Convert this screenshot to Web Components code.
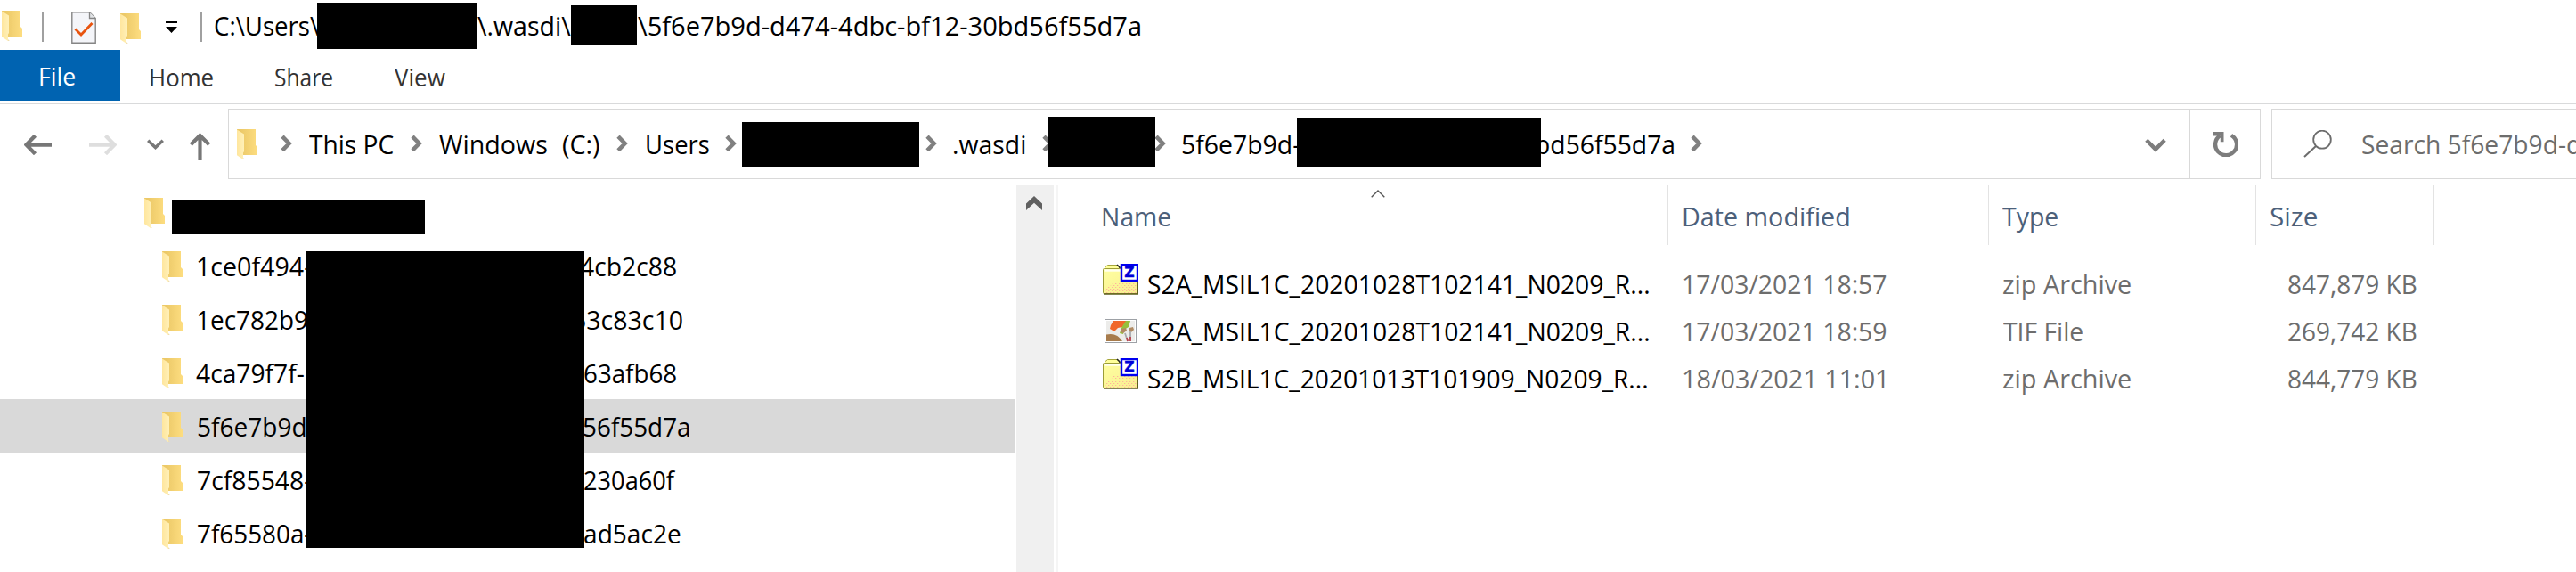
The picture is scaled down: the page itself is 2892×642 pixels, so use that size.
<!DOCTYPE html>
<html lang="en">
<head>
<meta charset="utf-8">
<title>File Explorer</title>
<style>
html,body{margin:0;background:#fff}
body{width:2892px;height:642px;overflow:hidden;font:29px/40px "Open Sans","Noto Sans",sans-serif;color:#000}
</style>
</head>
<body>
<explorer-window></explorer-window>
<script>
const define = (name, html, setup) => {
  customElements.define(name, class extends HTMLElement {
    connectedCallback() {
      if (this.shadowRoot) return;
      this.attachShadow({mode: 'open'}).innerHTML = typeof html === 'function' ? html(this) : html;
      if (setup) setup(this);
    }
  });
};

/* Text whose ink spans exactly the given width */
const ctx = document.createElement('canvas').getContext('2d');
define('fit-text', el => `<style>
  :host{display:block;flex:none;width:${el.getAttribute('w')}px;height:40px;white-space:pre}
  span{display:inline-block;transform-origin:0 0}
</style><span><slot></slot></span>`, el => {
  const cs = getComputedStyle(el);
  ctx.font = `${cs.fontWeight} ${cs.fontSize} ${cs.fontFamily}`;
  const m = ctx.measureText(el.textContent);
  const ink = m.actualBoundingBoxRight + m.actualBoundingBoxLeft;
  const s = el.getAttribute('w') / ink;
  el.shadowRoot.querySelector('span').style.transform = `scaleX(${s}) translateX(${m.actualBoundingBoxLeft}px)`;
});

define('redacted-box', el => `<style>
  :host{display:block;flex:none;position:relative;background:#000;width:${el.getAttribute('w')}px;height:${el.getAttribute('h')}px}
</style>`);

const zip = `<defs><pattern id="d" width="4" height="4" patternUnits="userSpaceOnUse"><path d="M0 .5h1.3M2 2.5h1.3" stroke="#ffb49a" stroke-width="1.2"/></pattern>
  <linearGradient id="y" x2="1" y2="1"><stop offset="0" stop-color="#ffffa0"/><stop offset="1" stop-color="#f8ee90"/></linearGradient></defs>
  <path d="M2.5 6V4L5.5 1.5H17L19 4v3" fill="#ffff99" stroke="#a6a63c"/>
  <path d="M16 1l3 3v4" fill="none" stroke="#222" stroke-width="1.5"/>
  <rect x=".5" y="5.5" width="39" height="28" rx="1" fill="url(#y)" stroke="#9c9c38"/>
  <path d="M1.5 7.5h19" stroke="#fffff0" stroke-width="2.4"/>
  <path d="M12 20h26v13H2v-5l8-4z" fill="url(#d)"/>
  <path d="M1 34h38.4V18" fill="none" stroke="#5d5d1c" stroke-width="1.6"/>
  <rect x="21" y="1" width="18" height="18" fill="#fff" stroke="#0000f0" stroke-width="2.4"/>
  <text transform="translate(30 15.4) scale(1.05 1)" text-anchor="middle" font-family="DejaVu Sans" font-weight="700" font-size="15" fill="#0000d8" stroke="#0000d8" stroke-width=".4">Z</text>`;
const ICONS = {
  folder: [23, 35, `<defs><linearGradient id="b"><stop offset=".2" stop-color="#ecc968"/><stop offset="1" stop-color="#fddd80"/></linearGradient>
    <linearGradient id="f"><stop offset="0" stop-color="#ffe69d"/><stop offset="1" stop-color="#fff0b8"/></linearGradient></defs>
    <path d="M0 0H21V18L23 20V29H7L0 24z" fill="url(#b)"/><path d="M0 0.4L8 5.5V25L7 26.5V34L0 29.2z" fill="url(#f)"/>
    <path d="M7 34l1.8-.1L7 32z" fill="#eeddb0"/>`],
  doc: [28, 36, `<path d="M.8.8H20.5L27.2 7.5V35.2H.8z" fill="#f4f5f9" stroke="#858585" stroke-width="1.4"/><path d="M20.5.8V7.5H27.2" fill="#e1e3e6" stroke="#858585" stroke-width="1.3"/><path d="M4.5 19.5L11 26L23.5 13" fill="none" stroke="#e8540f" stroke-width="2.8"/>`],
  menu: [13, 13, `<path d="M0 0H13V2H0zM0 6H13L6.5 13z"/>`],
  back: [31, 23, `<path d="M31 11.5H3M12.5 1.3L2.5 11.5l10 10.2" fill="none" stroke="#777" stroke-width="4.3"/>`],
  forward: [31, 23, `<path d="M0 11.5H28M18.5 1.3l10 10.2l-10 10.2" fill="none" stroke="#dedede" stroke-width="4.3"/>`],
  recent: [19, 12, `<path d="M1.2 1.7L9.5 9.6L17.8 1.7" fill="none" stroke="#777" stroke-width="3.4"/>`],
  up: [23, 31, `<path d="M11.5 31V3M1.3 13.2L11.5 3L21.7 13.2" fill="none" stroke="#777" stroke-width="4.2"/>`],
  crumb: [13, 18, `<path d="M2 1.2L9.6 9L2 16.8" fill="none" stroke="#808080" stroke-width="4.6"/>`],
  down: [24, 16, `<path d="M1.8 2.2L12 12.5L22.2 2.2" fill="none" stroke="#7d7d7d" stroke-width="4.4"/>`],
  refresh: [28, 28, `<path d="M21 3.8A12 12 0 1 1 8.5 4.2" fill="none" stroke="#7d7d7d" stroke-width="4.4"/><path d="M1 0H12.5V11.3H8.8V4.5H1z" fill="#7d7d7d"/>`],
  search: [32, 31, `<ellipse cx="21" cy="10.7" rx="9.8" ry="10" fill="none" stroke="#6c6c6c" stroke-width="1.8"/><path d="M14 18L1 30" stroke="#6c6c6c" stroke-width="2"/>`],
  scroll: [18, 16, `<path d="M0 8.5L9 0L18 8.5V16L9 7.8L0 16z" fill="#606060"/>`],
  sort: [16, 9, `<path d="M.7 8.2L8 1l7.3 7.2" fill="none" stroke="#555" stroke-width="1.4"/>`],
  zip: [40, 35, zip],
  tif: [36, 27, `<rect x=".5" y=".5" width="35" height="26" fill="#fff" stroke="#9da1a6"/><path d="M2 2H34V25H2z" fill="#ececea"/>
    <path d="M10 2H25L20 9l-5 1-4 4-5-3 1-4z" fill="#f0682a"/><path d="M24 2h5l-2 7-5 3-1 5-4-1 2-6z" fill="#96bf3c"/>
    <path d="M2 17.5c8-2 14 1 18 7.500H2z" fill="#a77b4c"/>
    <path d="M19 11l5-1 1 3-4 3-2-1zM28 10l4-1 1 3-3 3-3-2z" fill="#b08a62"/><path d="M23 16l3 9M29 14v9" stroke="#a8aaad" stroke-width="1.8"/><path d="M25 21l1 4M29 20v5" stroke="#b8404c" stroke-width="1.8"/>`]
};
define('ui-icon', el => {
  const [w, h, body] = ICONS[el.getAttribute('name')];
  return `<style>:host{display:block;flex:none;width:${w}px;height:${h}px}svg{display:block}</style><svg width="${w}" height="${h}" viewBox="0 0 ${w} ${h}">${body}</svg>`;
});

define('title-bar', `<style>
  :host{display:flex;height:56px;align-items:center}
  i{flex:none;width:2px;height:33px;background:#a0a0a0;margin-top:5px}
</style>
<ui-icon name="folder" style="margin:3px 0 0 2px"></ui-icon>
<i style="margin-left:22px"></i>
<ui-icon name="doc" style="margin:6px 0 0 31px"></ui-icon>
<ui-icon name="folder" style="margin:9px 0 0 27px"></ui-icon>
<ui-icon name="menu" style="margin:5px 0 0 28px"></ui-icon>
<i style="margin-left:26px"></i>
<fit-text w="117.5" style="margin:2px 0 0 14px">C:\\Users\\</fit-text>
<redacted-box w="179" h="52" style="margin:2px 0 0 -2.5px"></redacted-box>
<fit-text w="105" style="margin:2px 0 0 1px">\\.wasdi\\</fit-text>
<redacted-box w="74" h="44"></redacted-box>
<fit-text w="564" style="margin:2px 0 0 1px">\\5f6e7b9d-d474-4dbc-bf12-30bd56f55d7a</fit-text>`);

define('ribbon-tabs', `<style>
  :host{display:flex;height:60px;border-bottom:1px solid #d9dadb;font-size:27px;color:#333}
  div{box-sizing:border-box;height:57px;padding-top:10px}
  .file{width:135px;padding-left:45px;background:#0063b1;color:#fff}
  .tab{padding-top:11px}
</style>
<div class="file"><fit-text w="39">File</fit-text></div>
<div class="tab" style="margin-left:34px"><fit-text w="70">Home</fit-text></div>
<div class="tab" style="margin-left:70px"><fit-text w="64">Share</fit-text></div>
<div class="tab" style="margin-left:70px"><fit-text w="57">View</fit-text></div>`);

define('address-bar', `<style>
  :host{display:flex;flex:none;box-sizing:border-box;width:2282px;height:79px;border:1px solid #d9d9d9;align-items:center}
  ui-icon[name=crumb]{margin-top:-2px}
  hr{width:1px;height:77px;margin:0 0 0 26px;border:0;background:#d9d9d9}
</style>
<ui-icon name="folder" style="margin-left:9px;margin-top:1px"></ui-icon>
<ui-icon name="crumb" style="margin-left:26px"></ui-icon>
<fit-text w="95" style="margin-left:19px">This PC</fit-text>
<ui-icon name="crumb" style="margin-left:19px"></ui-icon>
<fit-text w="121" style="margin-left:19px">Windows</fit-text>
<fit-text w="41" style="margin-left:18px">(C:)</fit-text>
<ui-icon name="crumb" style="margin-left:19px"></ui-icon>
<fit-text w="70" style="margin-left:20.5px">Users</fit-text>
<ui-icon name="crumb" style="margin-left:18.5px"></ui-icon>
<redacted-box w="199" h="50" style="margin-left:6px;margin-top:1px"></redacted-box>
<ui-icon name="crumb" style="margin-left:7px"></ui-icon>
<fit-text w="80" style="margin-left:19px">.wasdi</fit-text>
<ui-icon name="crumb" style="margin-left:18.500px"></ui-icon>
<redacted-box w="120" h="56" style="margin-left:-5.5px;margin-top:-5px"></redacted-box>
<ui-icon name="crumb" style="margin-left:-1px"></ui-icon>
<fit-text w="133" style="margin-left:18px">5f6e7b9d-</fit-text>
<redacted-box w="274" h="54" style="margin-left:-4px;margin-top:-3px;z-index:1"></redacted-box>
<fit-text w="154" style="margin-left:-5.5px">bd56f55d7a</fit-text>
<ui-icon name="crumb" style="margin-left:19px"></ui-icon>
<ui-icon name="down" style="margin-left:auto;margin-top:2px"></ui-icon>
<hr>
<ui-icon name="refresh" style="margin:0 25px 0 25px"></ui-icon>`);

define('search-box', `<style>
  :host{display:flex;flex:1;min-width:0;overflow:hidden;box-sizing:border-box;height:79px;border:1px solid #d9d9d9;border-right:0;align-items:center;color:#6d6d6d}
</style>
<ui-icon name="search" style="margin-left:35px"></ui-icon>
<fit-text w="244.5" style="margin-left:34px;margin-top:1px">Search 5f6e7b9d-d</fit-text>`);

define('nav-bar', `<style>
  :host{display:flex;height:79px;padding:5px 0 7px;align-items:center}
</style>
<ui-icon name="back" style="margin-left:27px;margin-top:2px"></ui-icon>
<ui-icon name="forward" style="margin-left:42px;margin-top:2px"></ui-icon>
<ui-icon name="recent" style="margin-left:34px;margin-top:1px"></ui-icon>
<ui-icon name="up" style="margin-left:29px;margin-top:6px"></ui-icon>
<address-bar style="margin-left:20px"></address-bar>
<search-box style="margin-left:12px"></search-box>`);

define('tree-item', el => {
  const a = n => el.getAttribute(n);
  return `<style>
  :host{display:flex;height:60px;align-items:center;padding-left:182px}
  :host([selected]){background:#d9d9d9}
  ui-icon{margin-top:2px}
  fit-text{margin-top:2px}
</style>
<ui-icon name="folder"></ui-icon>
<fit-text w="${a('x1') - a('x0')}" style="margin-left:${a('x0') - 205}px">${a('head')}</fit-text>
<fit-text w="${a('x3') - a('x2')}" style="margin-left:${a('x2') - a('x1')}px">${a('tail')}</fit-text>`;
});

define('folder-tree', `<style>
  :host{display:block;position:relative;width:1140px;height:434px;flex:none}
  .root{display:flex;height:60px;padding-left:162px;box-sizing:border-box;align-items:flex-start}
  .cover{position:absolute;left:343px;top:74px}
</style>
<div class="root"><ui-icon name="folder" style="margin-top:14px"></ui-icon><redacted-box w="284" h="38" style="margin:17px 0 0 8px"></redacted-box></div>
<tree-item head="1ce0f494-" x0="222" x1="350" tail="4cb2c88" x2="651" x3="759.5"></tree-item>
<tree-item head="1ec782b9" x0="222" x1="345.5" tail="53c83c10" x2="643" x3="766.5"></tree-item>
<tree-item head="4ca79f7f-" x0="220" x1="341.5" tail="63afb68" x2="656" x3="759.5"></tree-item>
<tree-item selected head="5f6e7b9d" x0="221.500" x1="342.5" tail="56f55d7a" x2="654.5" x3="773"></tree-item>
<tree-item head="7cf85548-" x0="221.500" x1="349.500" tail="230a60f" x2="656" x3="759"></tree-item>
<tree-item head="7f65580a-" x0="221.500" x1="349.500" tail="ad5ac2e" x2="655.5" x3="763"></tree-item>
<redacted-box class="cover" w="313" h="333"></redacted-box>`);

define('scroll-track', `<style>
  :host{display:flex;align-items:flex-start;flex:none;width:42px;height:434px;background:#f0f0f0;margin-left:1px}
  ui-icon{margin:12px 0 0 11px}
</style><ui-icon name="scroll"></ui-icon>`);

define('list-header', `<style>
  :host{display:grid;grid-template-columns:685px 360px 300px 200px;height:67px;color:#4c607a}
  div{position:relative;box-sizing:border-box;border-right:1px solid #e3e3e3;padding-top:15px}
  ui-icon{position:absolute;left:351px;top:5px}
</style>
<div style="padding-left:50px"><ui-icon name="sort"></ui-icon><fit-text w="76">Name</fit-text></div>
<div style="padding-left:17px"><fit-text w="186">Date modified</fit-text></div>
<div style="padding-left:15px"><fit-text w="62">Type</fit-text></div>
<div style="padding-left:15.5px"><fit-text w="52">Size</fit-text></div>`);

define('file-row', el => {
  const a = n => el.getAttribute(n), z = a('icon') === 'zip';
  return `<style>
  :host{display:grid;grid-template-columns:685px 360px 300px 200px;height:53px;align-items:center;color:#6d6d6d}
  .n{display:flex;align-items:center;color:#000}
  .n ui-icon{margin:${z ? '-10px 11px 0 50px' : '0 13px 0 52px'}}
</style>
<div class="n"><ui-icon name="${a('icon')}"></ui-icon><fit-text w="${a('nw')}">${a('file')}</fit-text></div>
<fit-text w="${a('dw')}" style="margin-left:17px">${a('date')}</fit-text>
<fit-text w="${z ? 143 : 89}" style="margin-left:15.5px">${z ? 'zip Archive' : 'TIF File'}</fit-text>
<fit-text w="144" style="margin-left:35.5px">${a('size')}</fit-text>`;
});

define('file-list', `<style>
  :host{display:block;flex:1;margin-left:3px;height:434px;border-left:2px solid #f5f5f5}
  section{padding-top:17px}
</style>
<list-header></list-header>
<section>
<file-row icon="zip" file="S2A_MSIL1C_20201028T102141_N0209_R..." nw="562" date="17/03/2021 18:57" dw="228" size="847,879 KB"></file-row>
<file-row icon="tif" file="S2A_MSIL1C_20201028T102141_N0209_R..." nw="562" date="17/03/2021 18:59" dw="228" size="269,742 KB"></file-row>
<file-row icon="zip" file="S2B_MSIL1C_20201013T101909_N0209_R..." nw="560" date="18/03/2021 11:01" dw="226" size="844,779 KB"></file-row>
</section>`);

define('explorer-window', `<style>
  :host{display:block;width:2892px;height:642px;overflow:hidden;background:#fff}
  main{display:flex}
</style>
<title-bar></title-bar>
<ribbon-tabs></ribbon-tabs>
<nav-bar></nav-bar>
<main><folder-tree></folder-tree><scroll-track></scroll-track><file-list></file-list></main>`);
</script>
</body>
</html>
